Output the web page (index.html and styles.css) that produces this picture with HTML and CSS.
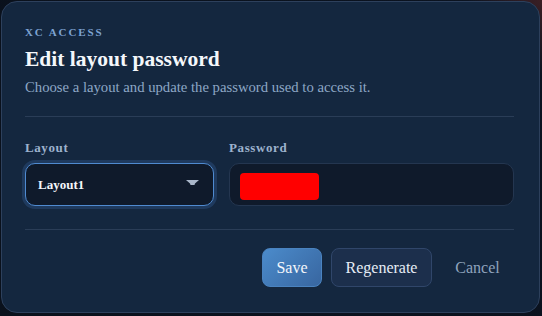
FILE: index.html
```html
<!DOCTYPE html>
<html lang="en">
<head>
    <meta charset="UTF-8">
    <meta name="viewport" content="width=device-width, initial-scale=1.0">
    <title>Edit layout password</title>
    <link rel="stylesheet" href="styles.css">
</head>
<body>
    <div class="dialog">
        <div class="eyebrow">XC ACCESS</div>
        <h1>Edit layout password</h1>
        <p class="subtitle">Choose a layout and update the password used to access it.</p>

        <div class="divider"></div>

        <div class="fields">
            <div class="field">
                <label>Layout</label>
                <div class="select">
                    <span>Layout1</span>
                    <svg class="caret" width="13" height="6" viewBox="0 0 13 6">
                        <path d="M0 0 H13 L9 3.5 L8.5 5 H4.5 L4 3.5 Z" fill="#a9b7ca"/>
                    </svg>
                </div>
            </div>
            <div class="field">
                <label>Password</label>
                <div class="input">
                    <span class="redacted"></span>
                </div>
            </div>
        </div>

        <div class="divider"></div>

        <div class="actions">
            <button class="btn btn-primary">Save</button>
            <button class="btn btn-secondary">Regenerate</button>
            <button class="btn btn-link">Cancel</button>
        </div>
    </div>
</body>
</html>
```

FILE: styles.css
```css
* {
    margin: 0;
    padding: 0;
    box-sizing: border-box;
}

body {
    font-family: "Liberation Serif", "Times New Roman", serif;
    background: radial-gradient(circle at 100% 0%, #3a1f24 0%, #0b1320 12%, #0a111c 100%);
    min-height: 100vh;
    padding: 1px 2px 0 1px;
    color: #f1f5fb;
}

.dialog {
    background: #14273f;
    border: 1px solid #2d405c;
    border-radius: 16px;
    padding: 24px 25px 25px 23px;
    height: 312px;
}

.eyebrow {
    font-size: 11px;
    font-weight: 700;
    letter-spacing: 1.9px;
    color: #7ea3d2;
    margin-bottom: 9px;
}

h1 {
    font-size: 21.5px;
    font-weight: 700;
    color: #f4f7fb;
    margin-bottom: 7px;
}

.subtitle {
    font-size: 14.7px;
    color: #8ea7c6;
    margin-bottom: 20px;
}

.divider {
    height: 1px;
    background: #2a3d57;
}

.fields {
    display: grid;
    grid-template-columns: 189px 1fr;
    gap: 15px;
    margin-top: 23px;
}

.field label {
    display: block;
    font-size: 13px;
    font-weight: 700;
    letter-spacing: 0.6px;
    color: #9db2cd;
    margin-bottom: 7px;
}

.select,
.input {
    height: 43px;
    border-radius: 10px;
    background: #0f1a2b;
    display: flex;
    align-items: center;
}

.select {
    border: 1px solid #4f8ad0;
    box-shadow: 0 0 0 3px #1f3a5e;
    padding: 0 14px 0 12px;
    justify-content: space-between;
    font-size: 13px;
    font-weight: 700;
    color: #f4f7fb;
}

.caret {
    margin-bottom: 3px;
}

.input {
    border: 1px solid #243650;
    padding-left: 10px;
    margin-bottom: 23px;
}

.redacted {
    width: 79px;
    height: 27px;
    margin-top: 4px;
    background: #ff0000;
    border-radius: 4px;
}

.actions {
    display: flex;
    justify-content: flex-end;
    gap: 9px;
    margin-top: 18px;
}

.btn {
    font-family: inherit;
    font-size: 16px;
    height: 39px;
    border-radius: 8px;
    cursor: pointer;
}

.btn-primary {
    width: 60px;
    border: 1px solid #4a83c0;
    background: linear-gradient(135deg, #4b8bcb 0%, #3866a0 100%);
    color: #f4f7fb;
}

.btn-secondary {
    width: 101px;
    border: 1px solid #30466a;
    background: #1c2f4c;
    color: #e6edf6;
}

.btn-link {
    width: 73px;
    border: none;
    background: none;
    color: #8fa3bd;
}
```
